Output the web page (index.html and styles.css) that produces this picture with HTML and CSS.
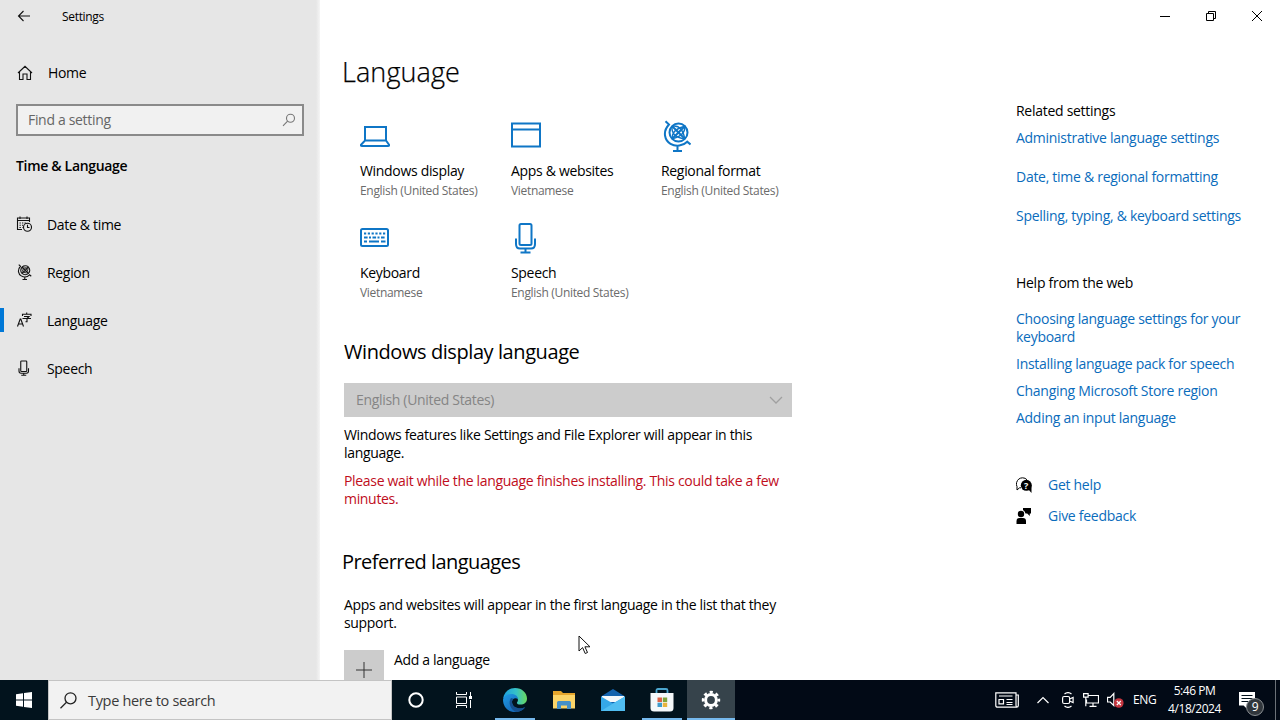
FILE: index.html
```html
<!DOCTYPE html>
<html lang="en">

<head>
    <meta charset="UTF-8">
    <meta name="viewport" content="width=device-width, initial-scale=1.0">
    <title>Settings - Language</title>
    <link rel="stylesheet" href="styles.css">
</head>

<body>
    <div class="window">
        <!-- Sidebar -->
        <aside class="sidebar">
            <div class="titlebar">
                <svg class="back" width="14" height="12" viewBox="0 0 14 12"><path d="M13 6H1.5M6.5 1l-5 5 5 5"/></svg>
                <span>Settings</span>
            </div>

            <a class="home">
                <svg width="16" height="16" viewBox="0 0 16 16"><path d="M1 8l7-6.700L15 8M2.500 7v7.500h3.500V9h4v5.500h3.500V7"/></svg>
                <span>Home</span>
            </a>

            <div class="find">
                <span>Find a setting</span>
                <svg width="14" height="14" viewBox="0 0 14 14"><circle cx="8.500" cy="5.300" r="4"/><path d="M5.600 8.200L1 12.800"/></svg>
            </div>

            <h3>Time &amp; Language</h3>

            <nav>
                <a>
                    <svg width="16" height="16" viewBox="0 0 16 16"><path d="M6 13.500H1.500V2h12v4M1.500 4.500h12M4 .5v2.500M11 .5v2.500"/><path d="M3.500 7h7M3.500 9.300h3.500M3.500 11.500h3" stroke-dasharray="1.300 1.200"/><circle cx="11.500" cy="11.300" r="4"/><path d="M11.500 8.800v2.700h2"/></svg>
                    <span>Date &amp; time</span>
                </a>
                <a>
                    <svg width="16" height="16" viewBox="0 0 30 32" class="thick"><use href="#globe"/></svg>
                    <span>Region</span>
                </a>
                <a class="active">
                    <svg width="16" height="16" viewBox="0 0 16 16"><path d="M1.500 14.500l2.700-7.500h.6l2.700 7.500M2.500 12h4"/><path d="M6.500 4V2.300H15V4M10.700.5v1.800M8 4.500h5l-2 2v3.300H9.500M6.500 6.500H15"/></svg>
                    <span>Language</span>
                </a>
                <a>
                    <svg width="16" height="16" viewBox="0 0 30 32" class="thick"><use href="#mic"/></svg>
                    <span>Speech</span>
                </a>
            </nav>
        </aside>

        <!-- Main content -->
        <main>
            <h1>Language</h1>

            <div class="tiles">
                <div class="tile">
                    <svg width="30" height="32" viewBox="0 0 30 32"><path d="M5 20.500V7h21v13.500M5 20.500h21l3 4.200q.5 1.300-1 1.300H2q-1.500 0-1-1.300z"/></svg>
                    <p>Windows display</p>
                    <small>English (United States)</small>
                </div>
                <div class="tile">
                    <svg width="30" height="32" viewBox="0 0 30 32"><path d="M1 3.500h28v23H1zM1 9.500h28"/></svg>
                    <p>Apps &amp; websites</p>
                    <small>Vietnamese</small>
                </div>
                <div class="tile">
                    <svg width="30" height="32" viewBox="0 0 30 32">
                        <g id="globe"><circle cx="17.500" cy="12.500" r="9"/><path d="M11.200 6.200l12.600 12.600M23.800 6.200L11.200 18.800"/><path d="M11.200 18.800Q10.500 9.500 23.800 6.200Q24.500 15.500 11.200 18.800M11.200 6.200Q21 4.500 23.800 18.800M11.200 6.200Q9.500 17 23.800 18.800" stroke-width="1.400"/><path d="M4.500 1.200L8 4.500C1 12 4 20.500 9.500 23.800C15 27 22 26 26.200 21.700L29.500 24.500M16.500 26v4.500M12 31h9"/></g>
                    </svg>
                    <p>Regional format</p>
                    <small>English (United States)</small>
                </div>
                <div class="tile">
                    <svg width="30" height="32" viewBox="0 0 30 32"><rect x="1" y="7" width="27" height="17" rx="1.500"/><path d="M4 11.500h21.500" stroke-dasharray="2.200 1.600"/><path d="M4 15.500h21.500" stroke-dasharray="3.600 1.400 2 1.500"/><path d="M4 19.500h3M9 19.500h10M21 19.500h4.500"/></svg>
                    <p>Keyboard</p>
                    <small>Vietnamese</small>
                </div>
                <div class="tile">
                    <svg width="30" height="32" viewBox="0 0 30 32">
                        <g id="mic"><rect x="8.500" y="2" width="12" height="21" rx="1.500"/><path d="M5 16.500V22q0 4.500 4 4.500h11q4 0 4-4.500v-5.500M14.500 26.500V30M9.500 30.500h10"/></g>
                    </svg>
                    <p>Speech</p>
                    <small>English (United States)</small>
                </div>
            </div>

            <h2>Windows display language</h2>
            <div class="select">
                <span>English (United States)</span>
                <svg width="14" height="8" viewBox="0 0 14 8"><path d="M1 1l6 6 6-6"/></svg>
            </div>
            <p class="text">Windows features like Settings and File Explorer will appear in this<br>language.</p>
            <p class="text error">Please wait while the language finishes installing. This could take a few<br>minutes.</p>

            <h2 class="preferred">Preferred languages</h2>
            <p class="text intro">Apps and websites will appear in the first language in the list that they<br>support.</p>
            <div class="add">
                <div class="plus"><svg width="16" height="16" viewBox="0 0 16 16"><path d="M8 0v16M0 8h16"/></svg></div>
                <span>Add a language</span>
            </div>
        </main>

        <!-- Related links -->
        <section class="related">
            <div class="controls">
                <svg width="10" height="10" viewBox="0 0 10 10"><path d="M0 5.500h10"/></svg>
                <svg width="10" height="10" viewBox="0 0 10 10"><path d="M.5 2.500h7v7h-7zM2.500 2.500v-2h7v7h-2"/></svg>
                <svg width="10" height="10" viewBox="0 0 10 10"><path d="M0 0l10 10M10 0L0 10"/></svg>
            </div>
            <h4>Related settings</h4>
            <ul class="settings">
                <li>Administrative language settings</li>
                <li>Date, time &amp; regional formatting</li>
                <li>Spelling, typing, &amp; keyboard settings</li>
            </ul>
            <h4>Help from the web</h4>
            <ul class="web">
                <li>Choosing language settings for your<br>keyboard</li>
                <li>Installing language pack for speech</li>
                <li>Changing Microsoft Store region</li>
                <li>Adding an input language</li>
            </ul>
            <div class="support">
                <svg width="16" height="16" viewBox="0 0 16 16"><path d="M5 10.800H3.500L1 13V9.500Q0 8 .6 5.500 2 1 6.500.8q3 0 4.500 2" fill="none" stroke="#000"/><circle cx="10.300" cy="8.300" r="5.500"/><path d="M12 12l3.500 4v-7z"/><text x="7.900" y="11.700">?</text></svg>
                <span>Get help</span>
            </div>
            <div class="support">
                <svg width="16" height="16" viewBox="0 0 16 16"><circle cx="5" cy="6" r="3.200"/><path d="M.5 16v-3q0-3 3-3H7q3 0 3 3v3zM7 0h8v5.500h-1.200V8l-2.600-2.500H9.500Q9 3 7 2z"/></svg>
                <span>Give feedback</span>
            </div>
        </section>
    </div>

    <!-- Taskbar -->
    <footer class="taskbar">
        <div class="start">
            <svg width="16" height="16" viewBox="0 0 16 16"><path d="M0 2.300L7 1.300v6.200H0zM8 1.100L16 0v7.500H8zM0 8.500h7v6.200L0 13.700zM8 8.500h8V16l-8-1.100z"/></svg>
        </div>
        <div class="search">
            <svg width="17" height="17" viewBox="0 0 17 17"><circle cx="10.500" cy="6.300" r="5.500"/><path d="M6.500 10.300L.5 16.300"/></svg>
            <span>Type here to search</span>
        </div>
        <div class="apps">
            <div class="app">
                <svg width="16" height="16" viewBox="0 0 16 16"><circle cx="8" cy="8" r="6.700" fill="none" stroke="#fff" stroke-width="2"/></svg>
            </div>
            <div class="app">
                <svg width="16" height="16" viewBox="0 0 16 16" fill="none" stroke="#fff"><path d="M.5 0v2.500h10V0M.5 5h10v6.500H.5zM.5 16v-2.500h10V16M14.500 0v4M14.500 8v8"/><path d="M13 5.500h3" stroke-width="3"/></svg>
            </div>
            <div class="app running edge">
                <svg width="24" height="24" viewBox="0 0 24 24">
                    <defs>
                        <linearGradient id="edgeTop" x1="0" y1=".5" x2="1" y2=".5"><stop offset="0" stop-color="#1c9fe0"/><stop offset=".55" stop-color="#35c1c8"/><stop offset="1" stop-color="#6ad85c"/></linearGradient>
                        <linearGradient id="edgeLow" x1="0" y1="0" x2="1" y2="1"><stop offset="0" stop-color="#1f9be6"/><stop offset="1" stop-color="#1257a8"/></linearGradient>
                    </defs>
                    <path d="M0 11C1 4 6 0 12 0c7 0 12 5 12 10.500 0 4-3 6-6.500 6-2.500 0-4-1-3.500-2 2-2 1-6.500-4-7C6 7.300 2 8 0 11z" fill="url(#edgeTop)"/>
                    <path d="M0 11.500C1 8 4.500 6 8.500 6c4 0 6.500 2.500 6.500 5-3-2-6 0-6 3 0 4 4 7 9 6.500 2-.2 3.500-1 4-1.200C20 22.500 16 24 12 24 5 24 0 19 0 11.500z" fill="url(#edgeLow)"/>
                    <path d="M8 10C5 14 7 22 13.500 23.900c4-.3 7-2 8.800-4.700C17 21.500 9 20 9 14c0-1.500.6-2.500 1.500-3.300z" fill="#15508f"/>
                </svg>
            </div>
            <div class="app">
                <svg width="22" height="20" viewBox="0 0 22 20"><path d="M0 1h8l2 2h12v5H0z" fill="#e5a52c"/><path d="M0 5h22v13.500H0z" fill="#fbd468"/><path d="M4 19v-6.500q0-1.500 1.500-1.500h11q1.500 0 1.500 1.500V19h-4v-3.500H8V19z" fill="#4590c8"/></svg>
            </div>
            <div class="app">
                <svg width="24" height="22" viewBox="0 0 24 22"><path d="M0 7.500L12 0l12 7.500V22H0z" fill="#1463ae"/><path d="M1 7h22v6H1z" fill="#f4f8fb"/><path d="M0 7.500l12 7 12-7V22H0z" fill="#35a7e8"/><path d="M0 22l12-7.500L24 7.500V22z" fill="#50bdf1"/></svg>
            </div>
            <div class="app running">
                <svg width="24" height="24" viewBox="0 0 24 24"><path d="M6.500 6V2.500q0-1.500 1.500-1.500h8q1.500 0 1.500 1.500V6" fill="none" stroke="#4ba6cf" stroke-width="1.800"/><path d="M.5 5h23v15q0 3.500-3.500 3.500H4Q.5 23.500.5 20z" fill="#f5f8fa"/><path d="M7.500 9.500H12V14H7.500z" fill="#dd6246"/><path d="M12.800 9.500h4.400V14h-4.400z" fill="#7fa53c"/><path d="M7.500 14.700H12V19H7.500z" fill="#3f9bcc"/><path d="M12.800 14.700h4.400V19h-4.400z" fill="#e8b43d"/></svg>
            </div>
            <div class="app running current">
                <svg width="20" height="20" viewBox="0 0 20 20" fill="none" stroke="#fff"><circle cx="10" cy="10" r="5.400" stroke-width="3"/><circle cx="10" cy="10" r="7.900" stroke-width="2.600" stroke-dasharray="3.200 3.005" stroke-dashoffset="1.600"/></svg>
            </div>
        </div>
        <div class="tray">
            <svg class="news" width="24" height="16" viewBox="0 0 24 16"><path d="M21 3h2.300v10.500q0 1.700-1.700 1.700H2.500Q.8 15.200.8 13.500V.8H21v12.500q0 1.900 1.200 1.900"/><path d="M4 4h13.500M11.500 7.500h6M11.500 10.500h6M4 7.500h4.500v4.300H4zM11.500 12.500h6"/></svg>
            <svg class="chevron" width="12" height="8" viewBox="0 0 12 8"><path d="M.5 7L6 1.500 11.500 7"/></svg>
            <svg class="meet" width="12" height="16" viewBox="0 0 12 16"><path d="M2.500 2Q6-.8 9.500 2M2.500 14q3.500 2.800 7 0"/><rect x=".6" y="4.500" width="7" height="7" rx="1.500"/><path d="M7.600 7l3.500-1.500v5L7.600 9"/></svg>
            <svg class="network" width="16" height="14" viewBox="0 0 16 14"><path d="M5.500 2.500h10v7.500H3.500V6.500M10 10v3M6.500 13.300h7M.6.600h4.500v3.500H.6zM2.800 4v9.300"/></svg>
            <svg class="sound" width="17" height="16" viewBox="0 0 17 16"><path d="M.5 5.300h2.700l3.600-3.800v12L3.200 10H.5z"/><circle cx="11.800" cy="11" r="4.800" fill="#c4353f" stroke="none"/><path d="M9.800 9l4 4M13.800 9l-4 4"/></svg>
            <span class="lang">ENG</span>
            <div class="clock">5:46 PM<br>4/18/2024</div>
            <div class="notify">
                <svg width="16" height="16" viewBox="0 0 16 16"><path d="M0 0h16v13H8v3l-3-3H0z" fill="#fff"/><path d="M2.500 3.500h11M2.500 6.500h11M2.500 9.500h7" stroke="#02111c"/></svg>
                <span class="badge">9</span>
            </div>
        </div>
    </footer>

    <svg class="cursor" width="13" height="20" viewBox="0 0 13 20"><path d="M1 1v15l3.600-3.400L7.200 18.500l2.300-1-2.600-5.700H12z"/></svg>
</body>

</html>
```

FILE: styles.css
```css
* {
    box-sizing: border-box;
}

body {
    margin: 0;
    width: 1280px;
    height: 720px;
    overflow: hidden;
    display: flex;
    flex-direction: column;
    font-family: "Open Sans", "Noto Sans", sans-serif;
    font-size: 14px;
    line-height: 18px;
    letter-spacing: -0.32px;
    color: #000;
    background-color: #fff;
}

h1, h2, h3, h4, p, ul {
    margin: 0;
    padding: 0;
    font-weight: 400;
}

svg {
    display: block;
    flex: none;
}

.window {
    height: 680px;
    display: flex;
    overflow: hidden;
}

/* Sidebar */
.sidebar {
    width: 320px;
    background: linear-gradient(to right, #e6e6e6 316px, #f5f5f5 320px);
}

.sidebar svg {
    fill: none;
    stroke: #111;
    stroke-width: 1.1;
}

.sidebar svg.thick {
    stroke-width: 2.2;
}

.titlebar {
    height: 32px;
    display: flex;
    align-items: center;
    padding-left: 17px;
    gap: 31px;
    font-size: 12px;
}

.titlebar span {
    padding-top: 2px;
}

.home {
    height: 48px;
    margin-top: 17px;
    padding-left: 17px;
    display: flex;
    align-items: center;
    gap: 15px;
}

.find {
    width: 288px;
    height: 32px;
    margin: 7px 0 0 16px;
    padding: 0 6px 1px 10px;
    display: flex;
    align-items: center;
    justify-content: space-between;
    border: 2px solid #8a8a8a;
    background-color: #f1f1f1;
    color: #666;
}

.find svg {
    stroke: #777;
}

h3 {
    margin: 21px 0 0 16px;
    font-size: 14px;
    font-weight: 600;
}

nav {
    margin-top: 26px;
}

nav a {
    height: 48px;
    padding-left: 16px;
    display: flex;
    align-items: center;
    gap: 15px;
}

nav svg {
    margin-top: -2px;
}

nav a.active {
    background: linear-gradient(#0078d7, #0078d7) 0 11px / 4px 24px no-repeat;
}

/* Main content */
main {
    width: 696px;
    padding: 54px 0 0 24px;
}

h1 {
    margin-left: -2px;
    font-size: 27px;
    font-weight: 300;
    line-height: 36px;
    letter-spacing: 0.1px;
    -webkit-text-stroke: 0.25px #000;
}

.tiles {
    margin: 30px 0 0 16px;
    display: grid;
    grid-template-columns: 151px 150px 151px;
    grid-auto-rows: 102px;
    white-space: nowrap;
}

.tile svg {
    height: 32px;
    margin-bottom: 10px;
    fill: none;
    stroke: #0f76c6;
    stroke-width: 2;
}

.tile small {
    display: block;
    margin-top: 2px;
    font-size: 12px;
    color: #6b6b6b;
}

h2 {
    margin-top: 14px;
    font-size: 20px;
    line-height: 28px;
    letter-spacing: -0.42px;
}

.select {
    width: 448px;
    height: 34px;
    margin-top: 17px;
    padding: 0 9px 0 12px;
    display: flex;
    align-items: center;
    justify-content: space-between;
    background-color: #ccc;
    color: #858585;
}

.select svg {
    fill: none;
    stroke: #a0a0a0;
    stroke-width: 1.3;
}

.text {
    margin-top: 9px;
    white-space: nowrap;
}

.error {
    margin-top: 10px;
    color: #c00d1c;
}

h2.preferred {
    margin: 40px 0 0 -2px;
    letter-spacing: -0.55px;
}

.intro {
    margin-top: 20px;
}

.add {
    display: flex;
    margin-top: 18px;
    gap: 10px;
}

.add span {
    margin-top: 1px;
}

.plus {
    width: 40px;
    height: 40px;
    display: flex;
    align-items: center;
    justify-content: center;
    background-color: #ccc;
}

.plus svg {
    stroke: #333;
}

/* Related links */
.related {
    width: 264px;
    letter-spacing: -0.28px;
    white-space: nowrap;
}

.controls {
    height: 32px;
    display: flex;
    align-items: center;
    justify-content: flex-end;
    gap: 36px;
    padding-right: 18px;
}

.controls svg {
    fill: none;
    stroke: #000;
}

h4 {
    margin-top: 70px;
    font-size: 14px;
}

ul {
    list-style: none;
    color: #0a6cbc;
}

.settings li {
    margin-top: 9px;
}

.settings li + li {
    margin-top: 21px;
}

.settings + h4 {
    margin-top: 49px;
}

.web {
    margin: 18px 0 49px;
}

.web li {
    margin-bottom: 9px;
}

.support {
    display: flex;
    align-items: center;
    gap: 16px;
    margin-bottom: 13px;
    color: #0a6cbc;
}

.support text {
    fill: #fff;
    font-size: 9px;
    font-weight: 700;
}

/* Taskbar */
.taskbar {
    height: 40px;
    display: flex;
    background-color: #02131d;
    color: #fff;
}

.start {
    width: 48px;
    display: flex;
    align-items: center;
    justify-content: center;
    fill: #fff;
}

.search {
    width: 344px;
    padding-left: 11px;
    display: flex;
    align-items: center;
    gap: 11px;
    border: 1px solid #c4c4c4;
    background-color: #f2f2f2;
    color: #3a3a3a;
    font-size: 14.5px;
}

.search span {
    padding-top: 1px;
}

.search svg {
    fill: none;
    stroke: #222;
    stroke-width: 1.3;
}

.apps {
    display: flex;
}

.app {
    width: 49px;
    display: flex;
    align-items: center;
    justify-content: center;
}

.app:nth-child(-n+2) {
    width: 48px;
}

.edge {
    margin-left: 2px;
}

.running {
    background: linear-gradient(#76b9ed, #76b9ed) 50% 100% / 40px 2px no-repeat;
}

.current {
    width: 48px;
    margin-left: 1px;
    background-color: #36434b;
    background-size: 48px 2px;
}

.tray {
    flex: 1;
    display: flex;
    align-items: center;
    justify-content: flex-end;
    background-color: #020a16;
    font-size: 12px;
}

.tray svg {
    fill: none;
    stroke: #fff;
    stroke-width: 1.2;
}

.news {
    margin-right: 18px;
}

.chevron {
    margin-right: 13px;
}

.meet {
    margin-right: 9px;
}

.network {
    margin-right: 8px;
}

.sound {
    margin-right: 9px;
}

.lang {
    width: 24px;
}

.clock {
    width: 75px;
    text-align: center;
    letter-spacing: -0.45px;
}

.notify {
    position: relative;
    width: 44px;
    height: 40px;
    padding: 12px 0 0 7px;
    border-right: 1px solid #6b7178;
    margin-right: 4px;
}

.badge {
    position: absolute;
    left: 14px;
    top: 18px;
    width: 18px;
    height: 18px;
    border: 1px solid #8a8e92;
    border-radius: 50%;
    background-color: #30363c;
    font-size: 12px;
    line-height: 15px;
    text-align: center;
}

/* Mouse pointer */
.cursor {
    position: absolute;
    left: 578px;
    top: 635px;
    fill: #fff;
    stroke: #111;
}
```
